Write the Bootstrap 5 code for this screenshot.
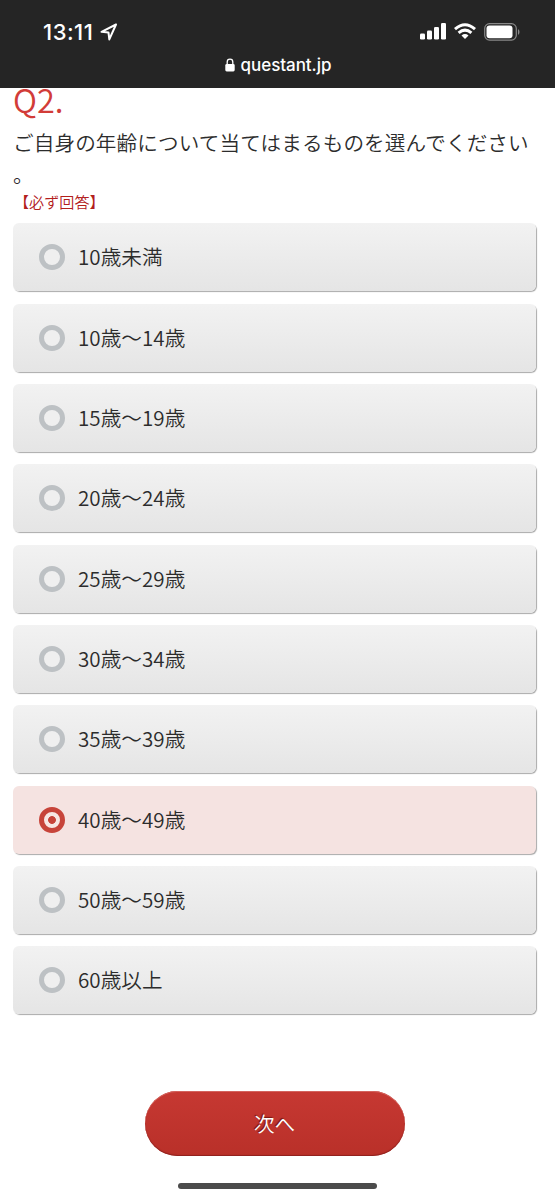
<!DOCTYPE html>
<html lang="ja">
<head>
<meta charset="utf-8">
<meta name="viewport" content="width=device-width, initial-scale=1">
<title>questant.jp</title>
<link href="https://cdn.jsdelivr.net/npm/bootstrap@5.3.0/dist/css/bootstrap.min.css" rel="stylesheet">
<style>
body{font-family:"Noto Sans CJK JP",sans-serif;font-size:20.6px;font-weight:350;color:#2c2c2c;height:1200px;background:#fff}
.browser-bar{height:88px;background:#252525;color:#fff;font-family:Inter,sans-serif}
.status-row{height:62px;padding:1px 36px 0 43px}
.clock{font-size:22px;font-weight:500;letter-spacing:.5px;line-height:1}
.address{font-size:17px;font-weight:500;line-height:20px;margin-top:-7px;letter-spacing:-.05px;padding-left:1px}
.survey{padding:0 19px 0 13px}
.q-number{font-size:32.5px;line-height:22px;color:#d23c38;height:30px}
.q-text{line-height:32px;padding-top:8px;height:72px;white-space:nowrap;letter-spacing:.12px}
.q-required{font-size:15.1px;line-height:22px;color:#b3201c;height:33.4px;padding-left:1px}
.options{gap:12.35px}
.option{height:68px;border-radius:6px;background:linear-gradient(#f2f2f2,#e5e5e5);box-shadow:1px 1px 1px #aaa;padding-left:26px}
.option input{position:absolute;opacity:0}
.option-text{line-height:30px;padding-bottom:2px;letter-spacing:.05px}
.ring{width:26px;height:26px;border:5px solid #bdc1c4;border-radius:50%;background:#efefef;margin-right:13px}
.option.selected{background:#f5e3e1}
.selected .ring{border-color:#c7443a;background:radial-gradient(circle,#c7443a 3.5px,#f7e7e4 4.3px)}
.next{width:260px;height:65px;margin-top:77px;padding:0 0 1px;border:0;border-radius:33px;font-size:20.6px;font-weight:350;color:#fff;background:linear-gradient(#c63832,#b93029);box-shadow:inset 0 1px 0 #d4635d,inset 0 -1px 1px #8e211d;text-shadow:-1px -1px 1px #751713}
.home-bar{width:199px;height:6px;border-radius:3px;background:#4b4b4b;margin-top:26.6px}
</style>
</head>
<body>
<header class="browser-bar">
  <div class="status-row d-flex align-items-center justify-content-between">
    <div class="d-flex align-items-center">
      <span class="clock">13:11</span>
      <svg style="margin-left:7px" width="18" height="18" viewBox="0 0 18 18" fill="none" stroke="#fff" stroke-width="2" stroke-linejoin="round"><path d="M16 1.5 1.5 8.8 8.5 9.6 9.3 16.4Z"/></svg>
    </div>
    <div class="d-flex align-items-center">
      <svg width="26" height="17" viewBox="0 0 26 17" fill="#fff"><rect x="0" y="10.5" width="5" height="6" rx="1.3"/><rect x="7" y="7.5" width="5" height="9" rx="1.3"/><rect x="14" y="4" width="5" height="12.5" rx="1.3"/><rect x="21" y="0" width="5" height="16.5" rx="1.3"/></svg>
      <svg style="margin-left:8px" width="22" height="17" viewBox="0 0 22 17" fill="none" stroke="#fff" stroke-width="3"><path d="M1 6.1Q11-2.7 21 6.1M4.6 9.9Q11 4.4 17.4 9.9"/><path d="M7.5 12.4Q11 9.5 14.5 12.4L11 16Z" fill="#fff" stroke="none"/></svg>
      <svg style="margin-left:8px;margin-right:-1px" width="36" height="18" viewBox="0 0 36 18"><rect x=".7" y=".7" width="31.6" height="16.4" rx="4.8" fill="none" stroke="#888" stroke-width="1.2"/><rect x="2.5" y="2.5" width="26" height="12.8" rx="3" fill="#fff"/><path d="M34 6v6q1.5-1 1.5-3T34 6" fill="#888"/></svg>
    </div>
  </div>
  <div class="address d-flex align-items-center justify-content-center">
    <svg style="margin-right:6px" width="10" height="14" viewBox="0 0 10 14"><rect x=".3" y="6" width="9.4" height="7.5" rx="1.4" fill="#fff"/><path d="M2.2 6.5V4a2.8 2.8 0 0 1 5.6 0v2.5" fill="none" stroke="#fff" stroke-width="1.3"/></svg>
    <span>questant.jp</span>
  </div>
</header>
<main class="survey">
  <div class="q-number">Q2.</div>
  <div class="q-text">ご自身の年齢について当てはまるものを選んでください<br>。</div>
  <div class="q-required">【必ず回答】</div>
  <div class="options d-flex flex-column">
    <label class="option d-flex align-items-center"><input type="radio" name="age"><span class="ring"></span><span class="option-text">10歳未満</span></label>
    <label class="option d-flex align-items-center"><input type="radio" name="age"><span class="ring"></span><span class="option-text">10歳〜14歳</span></label>
    <label class="option d-flex align-items-center"><input type="radio" name="age"><span class="ring"></span><span class="option-text">15歳〜19歳</span></label>
    <label class="option d-flex align-items-center"><input type="radio" name="age"><span class="ring"></span><span class="option-text">20歳〜24歳</span></label>
    <label class="option d-flex align-items-center"><input type="radio" name="age"><span class="ring"></span><span class="option-text">25歳〜29歳</span></label>
    <label class="option d-flex align-items-center"><input type="radio" name="age"><span class="ring"></span><span class="option-text">30歳〜34歳</span></label>
    <label class="option d-flex align-items-center"><input type="radio" name="age"><span class="ring"></span><span class="option-text">35歳〜39歳</span></label>
    <label class="option selected d-flex align-items-center"><input type="radio" name="age" checked><span class="ring"></span><span class="option-text">40歳〜49歳</span></label>
    <label class="option d-flex align-items-center"><input type="radio" name="age"><span class="ring"></span><span class="option-text">50歳〜59歳</span></label>
    <label class="option d-flex align-items-center"><input type="radio" name="age"><span class="ring"></span><span class="option-text">60歳以上</span></label>
  </div>
  <button type="button" class="next d-block mx-auto">次へ</button>
</main>
<div class="home-bar mx-auto"></div>
<script src="https://cdn.jsdelivr.net/npm/bootstrap@5.3.0/dist/js/bootstrap.bundle.min.js"></script>
</body>
</html>
